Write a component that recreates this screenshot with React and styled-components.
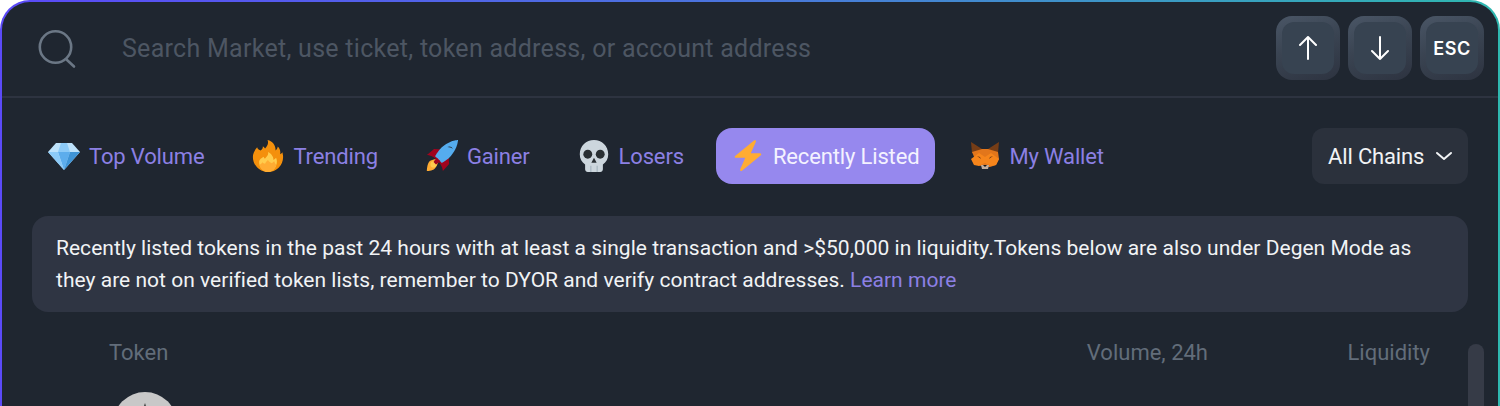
import React from 'react';
import styled, { createGlobalStyle } from 'styled-components';

const Global = createGlobalStyle`
  html, body { margin: 0; padding: 0; background: #fff; }
  body { width: 1500px; height: 406px; overflow: hidden; font-family: Roboto, "Liberation Sans", sans-serif; }
`;

const Frame = styled.div`
  width: 1500px;
  height: 406px;
  box-sizing: border-box;
  padding: 2px 2px 0;
  border-radius: 30px 30px 0 0;
  background: linear-gradient(90deg, #5b4af8 0%, #4a76dc 50%, #2fb8b0 100%);
`;

const Panel = styled.div`
  height: 100%;
  border-radius: 28px 28px 0 0;
  background: #1f2630;
  overflow: hidden;
`;

const SearchBar = styled.div`
  height: 94px;
  display: flex;
  align-items: center;
  padding: 0 14px 0 34px;
  border-bottom: 2px solid #2d3340;
`;

const SearchInput = styled.div`
  flex: 1;
  margin-left: 42px;
  font-size: 25px;
  color: #4d5663;
  letter-spacing: 0.28px;
  white-space: nowrap;
  margin-top: -2px;
`;

const Keys = styled.div`
  display: flex;
  gap: 8px;
  margin-top: -2px;
`;

const Key = styled.div`
  width: 64px;
  height: 64px;
  box-sizing: border-box;
  padding: 6px;
  border-radius: 16px;
  background: linear-gradient(160deg, #4a5666 0%, #3a4452 45%, #2d3340 100%);
`;

const KeyCap = styled.div`
  height: 100%;
  border-radius: 12px;
  background: #374351;
  display: flex;
  align-items: center;
  justify-content: center;
  color: #fff;
  font-family: Inter, sans-serif;
  font-size: 18px;
  font-weight: 600;
  letter-spacing: 0.6px;
`;

const TabRow = styled.div`
  display: flex;
  align-items: center;
  justify-content: space-between;
  padding: 30px 30px 0;
`;

const Tabs = styled.div`
  display: flex;
  gap: 16px;
`;

const Tab = styled.div`
  height: 56px;
  display: flex;
  align-items: center;
  gap: 9px;
  padding: 0 16px;
  border-radius: 16px;
  font-size: 22px;
  letter-spacing: -0.15px;
  color: ${p => (p.$active ? '#f4f2ff' : '#8c80e4')};
  background: ${p => (p.$active ? '#9688ee' : 'transparent')};
`;

const ChainSelect = styled.div`
  width: 156px;
  height: 56px;
  box-sizing: border-box;
  display: flex;
  align-items: center;
  justify-content: space-between;
  padding: 0 15px 0 16px;
  border-radius: 12px;
  background: #2b313c;
  color: #f1f3f5;
  font-size: 22px;
  letter-spacing: -0.15px;
`;

const Notice = styled.div`
  margin: 32px 30px 0;
  height: 96px;
  box-sizing: border-box;
  padding: 16px 24px;
  border-radius: 16px;
  background: #2f3543;
  color: #f1f3f5;
  font-size: 21px;
  line-height: 32px;
  letter-spacing: 0.02px;
`;

const LearnMore = styled.span`
  color: #8c80e4;
`;

const TableArea = styled.div`
  display: flex;
  padding: 32px 14px 0 0;
  gap: 38px;
`;

const Table = styled.div`
  flex: 1;
  display: flex;
  flex-direction: column;
`;

const HeadRow = styled.div`
  display: flex;
  height: 16px;
  align-items: center;
  color: #626d7a;
  font-size: 22px;
`;

const HeadCell = styled.div`
  width: ${p => p.$w}px;
  flex: ${p => (p.$grow ? 1 : 'none')};
  text-align: ${p => (p.$right ? 'right' : 'left')};
  padding-left: ${p => p.$pl || 0}px;
`;

const Coin = styled.div`
  margin: 32px 0 0 111px;
  width: 64px;
  height: 64px;
  border-radius: 50%;
  background: #c8c8c8;
  display: flex;
  justify-content: center;
  padding-top: 11px;
  box-sizing: border-box;
`;

const ScrollThumb = styled.div`
  width: 16px;
  height: 120px;
  border-radius: 8px;
  background: #363b47;
`;

const SearchIcon = () => (
  <svg width="44" height="44" viewBox="0 0 44 44" fill="none" stroke="#6b7785" strokeWidth="2.6">
    <circle cx="19.5" cy="20" r="15.7" />
    <path d="M31 33l7 6.5" strokeLinecap="round" />
  </svg>
);

const Arrow = ({ down }) => (
  <svg width="24" height="24" viewBox="0 0 24 24" fill="none" stroke="#fff" strokeWidth="2" strokeLinecap="round" strokeLinejoin="round">
    {down ? <path d="M12 1v22M4 15l8 8 8-8" /> : <path d="M12 23V1M4 9l8-8 8 8" />}
  </svg>
);

const Diamond = () => (
  <svg width="32" height="32" viewBox="0 0 32 32">
    <path fill="#bde2fb" d="M8 3h16l8 9-16 18L0 12z" />
    <path fill="#5dadec" d="M10 12h12l-6 18z" />
    <path fill="#8ccaf7" d="M0 12h10l6 18z" />
    <path fill="#3f94d6" d="M32 12H22l-6 18z" />
    <path fill="#8ccaf7" d="M10 12l3-9h6l3 9z" />
  </svg>
);

const Fire = () => (
  <svg width="32" height="32" viewBox="0 0 36 36">
    <path fill="#f4900c" d="M35 19c0-2-.8-5.300-.8-5.300s-1 1.600-2.500 2.200c.6-3.300-.4-6.200-2.700-8.600-.3 2-1.200 3.600-2.500 4.500.2-5.200-2.800-10.500-9-11.800 1.600 4.200-.6 7-2.800 9.700-.8-1.200-1.400-2-2.500-2.700.3 2.200-1.100 3.700-2.400 4.800C6.800 10.800 6 9.500 5.800 8.200 3 11.500 1 15 1 19c0 9.400 7.600 17 17 17s17-7.600 17-17z" />
    <path fill="#ffcc4d" d="M28 24c0-1.500-.3-2.800-.9-4-1 1.200-1.900 2-3 2.400.4-3-2-7-6.100-9 .9 3.800-1.700 5-3.500 7.800-.7-.6-1.200-1.400-1.500-2.300-2 1.300-5 3-5 5.700C8 31 12.500 35.800 18 35.800S28 31 28 24z" />
    <path fill="#ffac33" d="M8.500 28c1.500-.8 2.500-2 3.200-3 .7 1 1.700 1.600 3 1.700.5-1.700 2-3 3.300-4.200 1 1.800 2.800 3.200 4.500 3.700.6-.8 1.300-1.400 2.500-2.200.5 1.500 1.200 3 2.300 4C26 32.800 22.300 36 18 36s-8-3-9.500-8z" />
  </svg>
);

const Rocket = () => (
  <svg width="32" height="32" viewBox="0 0 36 36">
    <path fill="#a0041e" d="M1 17l8-7 16 1 1 16-7 8s0-6-6-12-12-6-12-6z" />
    <path fill="#ffac33" d="M1 35s0-8 3-11 11-3 11-3-2 8-5 11c-3 3-9 3-9 3z" />
    <circle fill="#ffcc4d" cx="8.500" cy="27.500" r="3.500" />
    <path fill="#55acee" d="M36 0s-10 0-20 10c-2.800 2.800-5.800 8.300-5.800 8.300l7.600 7.500s5.500-3 8.300-5.800C36 10.100 36 0 36 0z" />
    <path fill="#a0041e" d="M12 19.800l4.200 4.200-5 3.500-2.700-2.700z" />
    <path fill="#292f33" d="M24 8c2-1.200 5-1 6 2-1.500-1.300-3.800-1.500-6-2z" />
  </svg>
);

const Skull = () => (
  <svg width="32" height="32" viewBox="0 0 36 36">
    <path fill="#ccd6dd" d="M34 16C34 6.600 26.800 0 18 0S2 6.600 2 16c0 5.100 2.300 9 6 11.500V33c0 1.700 1.300 3 3 3h14c1.700 0 3-1.300 3-3v-5.500c3.700-2.500 6-6.400 6-11.500z" />
    <circle fill="#292f33" cx="11" cy="16" r="5" />
    <circle fill="#292f33" cx="25" cy="16" r="5" />
    <path fill="#292f33" d="M18 20l-3 5.500h6z" />
    <path fill="#99aab5" d="M14 29h1v7h-1zM21 29h1v7h-1z" />
  </svg>
);

const Bolt = () => (
  <svg width="32" height="32" viewBox="0 0 36 36">
    <path fill="#ffac33" d="M32.900 15.700C32.700 15.300 32.200 15 31.700 15H21.100L26.900 1.900c.2-.5 0-1.200-.5-1.500-.5-.3-1.100-.3-1.600.1L3.500 17.900c-.4.300-.6.900-.4 1.400.2.500.7.800 1.200.8h10.600L9.100 33.100c-.2.500 0 1.200.5 1.500.2.200.5.300.8.300.3 0 .6-.1.800-.3l21.300-17.500c.4-.3.600-.9.400-1.400z" />
  </svg>
);

const Fox = () => (
  <svg width="33" height="32" viewBox="-3 0 33 32">
    <path fill="#763d16" d="M1 2l11 7h6l11-7-1 11-13 1-13-1z" />
    <path fill="#e2761b" d="M2 12l10-3h6l10 3 1 7-3 6-6 2h-6l-6-2-3-6z" />
    <path fill="#f6851b" d="M1 19l8-6 6 4 6-4 8 6-3 6-5 1-6-3-6 3-5-1z" />
    <path fill="#c0ad9e" d="M11 25h8l-1 4h-6z" />
    <path fill="#161616" d="M13 25h4l-2 2z" />
    <path fill="#763d16" d="M7 16l3 1 1 2zM23 16l-3 1-1 2z" />
  </svg>
);

const Chevron = () => (
  <svg width="18" height="12" viewBox="0 0 18 12" fill="none" stroke="#f1f3f5" strokeWidth="2" strokeLinecap="round" strokeLinejoin="round">
    <path d="M2 3l7 6 7-6" />
  </svg>
);

const CoinMark = () => (
  <svg width="20" height="30" viewBox="0 0 20 30">
    <path fill="#4a4a4a" d="M10 0l8 22-8 6-8-6z" />
  </svg>
);

const tabs = [
  { label: 'Top Volume', icon: <Diamond /> },
  { label: 'Trending', icon: <Fire /> },
  { label: 'Gainer', icon: <Rocket /> },
  { label: 'Losers', icon: <Skull /> },
  { label: 'Recently Listed', icon: <Bolt />, active: true },
  { label: 'My Wallet', icon: <Fox /> },
];

export default function App() {
  return (
    <>
      <Global />
      <Frame>
        <Panel>
          <SearchBar>
            <SearchIcon />
            <SearchInput>Search Market, use ticket, token address, or account address</SearchInput>
            <Keys>
              <Key><KeyCap><Arrow /></KeyCap></Key>
              <Key><KeyCap><Arrow down /></KeyCap></Key>
              <Key><KeyCap>ESC</KeyCap></Key>
            </Keys>
          </SearchBar>
          <TabRow>
            <Tabs>
              {tabs.map(t => (
                <Tab key={t.label} $active={t.active}>{t.icon}{t.label}</Tab>
              ))}
            </Tabs>
            <ChainSelect>All Chains <Chevron /></ChainSelect>
          </TabRow>
          <Notice>
            Recently listed tokens in the past 24 hours with at least a single transaction and &gt;$50,000 in liquidity.Tokens below are also under Degen Mode as they are not on verified token lists, remember to DYOR and verify contract addresses. <LearnMore>Learn more</LearnMore>
          </Notice>
          <TableArea>
            <Table>
              <HeadRow>
                <HeadCell $grow $pl={107}>Token</HeadCell>
                <HeadCell $w={200} $right>Volume, 24h</HeadCell>
                <HeadCell $w={222} $right>Liquidity</HeadCell>
              </HeadRow>
              <Coin><CoinMark /></Coin>
            </Table>
            <ScrollThumb />
          </TableArea>
        </Panel>
      </Frame>
    </>
  );
}
